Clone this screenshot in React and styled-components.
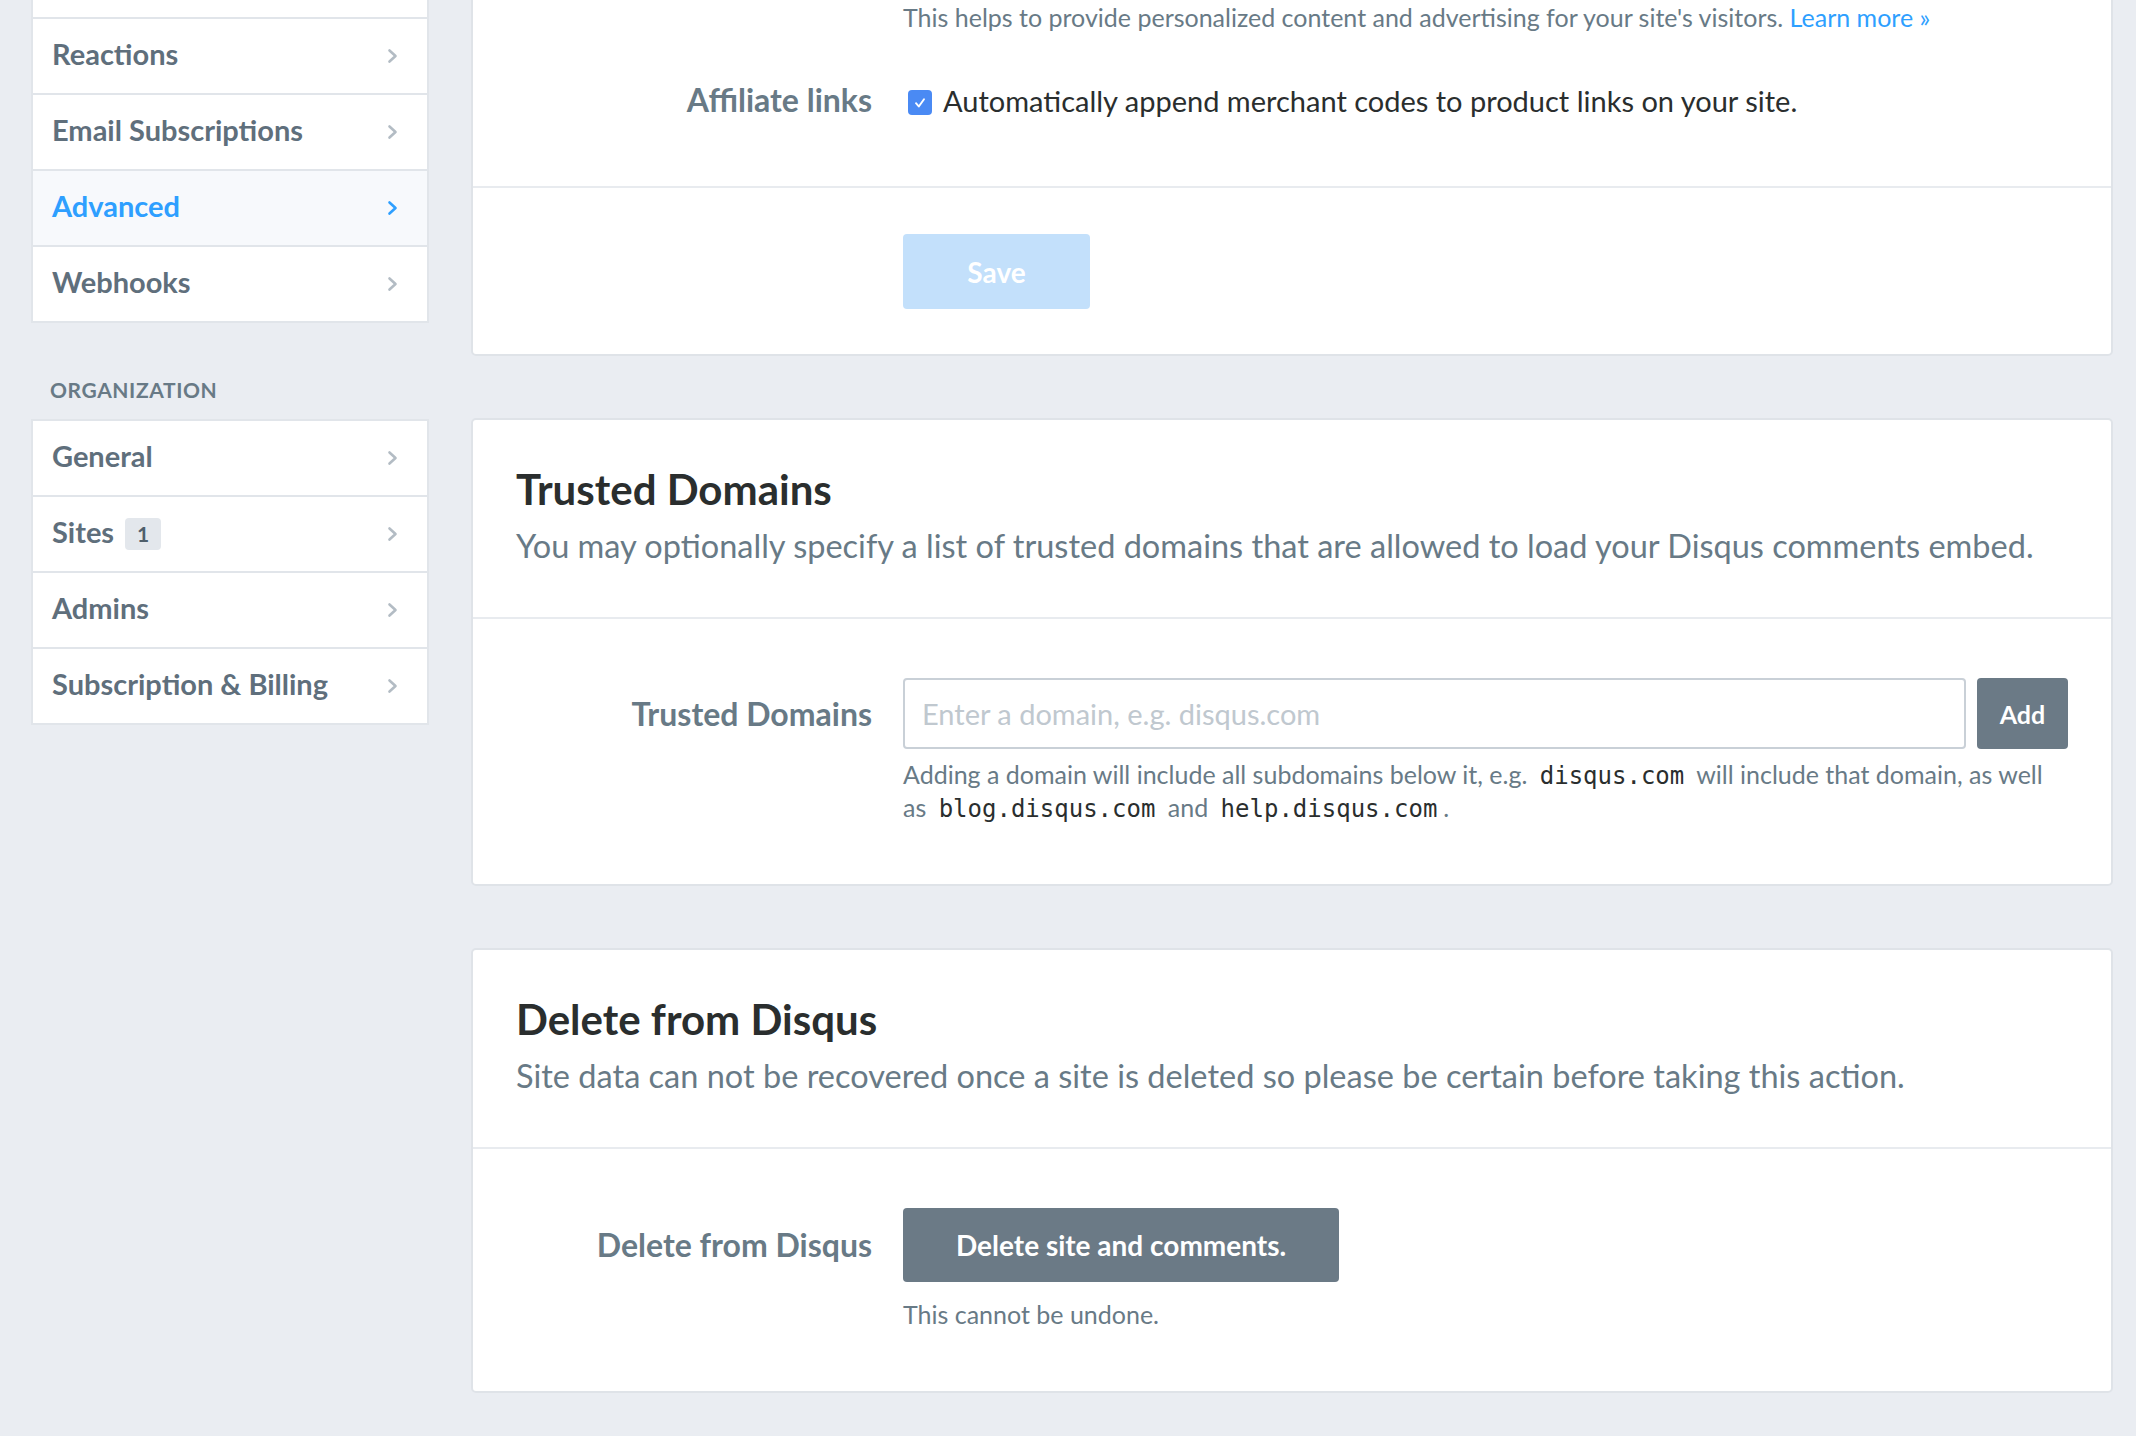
import React from 'react';
import styled, { createGlobalStyle } from 'styled-components';

const GlobalStyle = createGlobalStyle`
  html, body {
    margin: 0;
    padding: 0;
    background: #eaedf2;
    overflow: hidden;
  }
  body {
    font-family: Lato, "Noto Sans", sans-serif;
    color: #2a2e2e;
  }
`;

const Page = styled.div`
  display: grid;
  grid-template-columns: 398px 1642px;
  column-gap: 42px;
  align-items: start;
  padding: 0 23px 0 31px;
  margin-top: -59px;
`;

const Sidebar = styled.nav`
  display: flex;
  flex-direction: column;
`;

const NavGroup = styled.ul`
  list-style: none;
  margin: 0;
  padding: 0;
  background: #fff;
  border: 2px solid #e1e5ea;
`;

const NavItem = styled.li`
  display: flex;
  align-items: center;
  justify-content: space-between;
  height: 74px;
  padding: 0 29px 0 19px;
  background: ${p => (p.active ? '#f7f9fc' : '#fff')};
  color: ${p => (p.active ? '#2e9fff' : '#5f6f7c')};
  font-size: 29px;
  font-weight: 700;
  & + & {
    border-top: 2px solid #e1e5ea;
  }
`;

const NavLabel = styled.span`
  display: flex;
  align-items: center;
  gap: 11px;
  padding-bottom: 5px;
`;

const Badge = styled.span`
  display: inline-flex;
  align-items: center;
  justify-content: center;
  width: 36px;
  height: 32px;
  margin-top: 4px;
  border-radius: 4px;
  background: #e3e7ec;
  color: #4f5f6b;
  font-size: 21px;
  font-weight: 700;
`;

const SectionTitle = styled.h4`
  margin: 53px 0 15px 19px;
  font-size: 21px;
  line-height: 28px;
  font-weight: 700;
  letter-spacing: 0.6px;
  color: #687a86;
`;

const Main = styled.main`
  display: flex;
  flex-direction: column;
  gap: 62px;
`;

const Card = styled.section`
  background: #fff;
  border: 2px solid #dfe3e8;
  border-radius: 5px;
`;

const CardBlock = styled.div`
  padding: ${p => p.pad || '44px 43px 51px'};
  & + & {
    border-top: 2px solid #e8ebef;
  }
`;

const Heading = styled.h2`
  margin: 0;
  font-size: 42px;
  line-height: 50px;
  font-weight: 700;
  color: #2a2e2e;
`;

const Lead = styled.p`
  margin: 12px 0 0;
  font-size: 32.5px;
  line-height: 40px;
  color: #687a86;
`;

const Field = styled.div`
  display: grid;
  grid-template-columns: 356px 1fr;
  column-gap: 31px;
  align-items: start;
  margin-top: ${p => p.mt || '0'};
`;

const Label = styled.label`
  justify-self: end;
  font-size: 32px;
  font-weight: 700;
  color: #687a86;
  line-height: ${p => p.lh || '42px'};
  white-space: nowrap;
`;

const Control = styled.div`
  display: flex;
  flex-direction: column;
  min-width: 0;
`;

const CheckRow = styled.div`
  display: flex;
  align-items: center;
  gap: 11px;
  height: 42px;
  margin-left: 5px;
  font-size: 29px;
  color: #2a2e2e;
`;

const Checkbox = styled.span`
  display: inline-flex;
  align-items: center;
  justify-content: center;
  flex: none;
  width: 24px;
  height: 25px;
  border-radius: 4px;
  background: #4a8af4;
  margin-top: 5px;
`;

const Help = styled.p`
  margin: ${p => p.mt || '9px'} 0 0;
  font-size: 25px;
  line-height: 33px;
  color: #687a86;
`;

const Link = styled.a`
  color: #2e9fff;
  text-decoration: none;
`;

const Code = styled.code`
  font-family: "DejaVu Sans Mono", "Liberation Mono", monospace;
  font-size: 24px;
  line-height: 1;
  color: #2a2e2e;
  margin: 0 6px;
`;

const InputRow = styled.div`
  display: flex;
  gap: 11px;
`;

const Input = styled.input`
  flex: 1;
  height: 71px;
  box-sizing: border-box;
  border: 2px solid #c9d0d7;
  border-radius: 4px;
  padding: 0 17px;
  font-family: inherit;
  font-size: 29px;
  color: #2a2e2e;
  outline: none;
  &::placeholder {
    color: #c0c8cf;
  }
`;

const Button = styled.button`
  box-sizing: border-box;
  height: ${p => p.h || '74px'};
  width: ${p => p.w || 'auto'};
  padding: 0 ${p => p.px || '0'};
  border: none;
  border-radius: 4px;
  background: ${p => (p.light ? '#c3e0fb' : '#6b7a86')};
  color: #fff;
  font-family: inherit;
  font-size: ${p => p.fs || '28px'};
  font-weight: 700;
  align-self: flex-start;
  cursor: pointer;
`;

const Chevron = ({ active }) => (
  <svg width="11" height="16" viewBox="0 0 11 16" fill="none">
    <path
      d="M2.5 2.5l6 5.5-6 5.5"
      stroke={active ? '#2e9fff' : '#b3bcc4'}
      strokeWidth="2.6"
      strokeLinecap="round"
      strokeLinejoin="round"
    />
  </svg>
);

const Check = () => (
  <svg width="14" height="14" viewBox="0 0 14 14" fill="none">
    <path d="M3 7.2l2.8 3.3L11 3.2" stroke="#fff" strokeWidth="1.9" strokeLinecap="round" strokeLinejoin="round" />
  </svg>
);

const siteNav = [
  { label: 'Community' },
  { label: 'Reactions' },
  { label: 'Email Subscriptions' },
  { label: 'Advanced', active: true },
  { label: 'Webhooks' },
];

const orgNav = [
  { label: 'General' },
  { label: 'Sites', badge: 1 },
  { label: 'Admins' },
  { label: 'Subscription & Billing' },
];

const Nav = ({ items }) => (
  <NavGroup>
    {items.map(item => (
      <NavItem key={item.label} active={item.active}>
        <NavLabel>
          {item.label}
          {item.badge && <Badge>{item.badge}</Badge>}
        </NavLabel>
        <Chevron active={item.active} />
      </NavItem>
    ))}
  </NavGroup>
);

export default function App() {
  return (
    <>
      <GlobalStyle />
      <Page>
        <Sidebar>
          <Nav items={siteNav} />
          <SectionTitle>ORGANIZATION</SectionTitle>
          <Nav items={orgNav} />
        </Sidebar>

        <Main>
          <Card>
            <CardBlock pad="13px 43px 65px">
              <Field>
                <Label>Audience</Label>
                <Control>
                  <CheckRow>
                    <Checkbox><Check /></Checkbox>
                    Enable audience segmentation.
                  </CheckRow>
                  <Help mt="3px">
                    This helps to provide personalized content and advertising for your site's visitors.{' '}
                    <Link href="#">Learn more »</Link>
                  </Help>
                </Control>
              </Field>
              <Field mt="45px">
                <Label>Affiliate links</Label>
                <Control>
                  <CheckRow>
                    <Checkbox><Check /></Checkbox>
                    Automatically append merchant codes to product links on your site.
                  </CheckRow>
                </Control>
              </Field>
            </CardBlock>
            <CardBlock pad="46px 43px 45px">
              <Field>
                <span />
                <Button light w="187px" h="75px">Save</Button>
              </Field>
            </CardBlock>
          </Card>

          <Card>
            <CardBlock>
              <Heading>Trusted Domains</Heading>
              <Lead>You may optionally specify a list of trusted domains that are allowed to load your Disqus comments embed.</Lead>
            </CardBlock>
            <CardBlock pad="59px 43px 60px">
              <Field>
                <Label lh="71px">Trusted Domains</Label>
                <Control>
                  <InputRow>
                    <Input placeholder="Enter a domain, e.g. disqus.com" />
                    <Button w="91px" h="71px" fs="25px">Add</Button>
                  </InputRow>
                  <Help>
                    Adding a domain will include all subdomains below it, e.g. <Code>disqus.com</Code> will include that domain, as well
                    as <Code>blog.disqus.com</Code> and <Code>help.disqus.com</Code>.
                  </Help>
                </Control>
              </Field>
            </CardBlock>
          </Card>

          <Card>
            <CardBlock>
              <Heading>Delete from Disqus</Heading>
              <Lead>Site data can not be recovered once a site is deleted so please be certain before taking this action.</Lead>
            </CardBlock>
            <CardBlock pad="59px 43px 60px">
              <Field>
                <Label lh="74px">Delete from Disqus</Label>
                <Control>
                  <Button px="53px">Delete site and comments.</Button>
                  <Help mt="16px">This cannot be undone.</Help>
                </Control>
              </Field>
            </CardBlock>
          </Card>
        </Main>
      </Page>
    </>
  );
}
